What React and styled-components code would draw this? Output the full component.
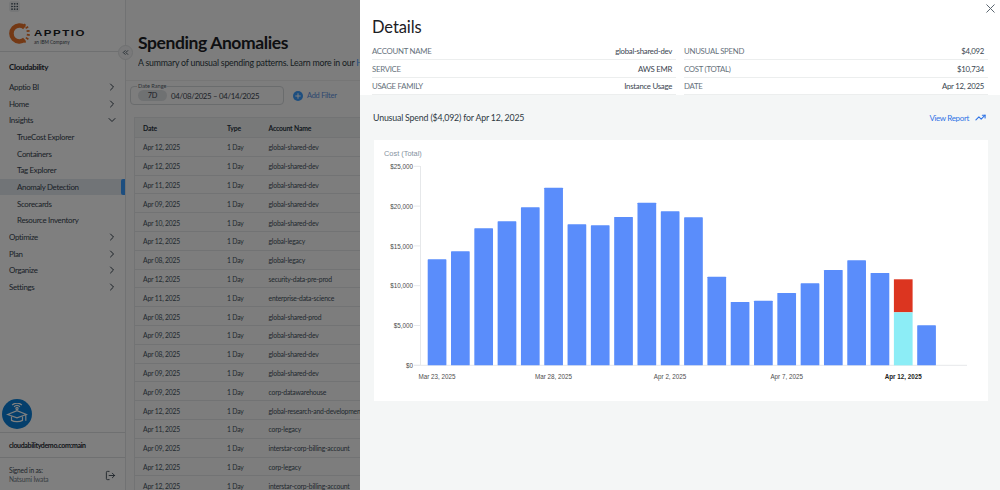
import React from 'react';
import styled, { createGlobalStyle } from 'styled-components';
import { ChevronRight, ChevronDown, ChevronsLeft, Plus, X, TrendingUp, LogOut, Grip } from 'lucide-react';

const Global = createGlobalStyle`
  html, body { margin: 0; height: 100%; overflow: hidden; background: #fff; }
  body { font-family: Lato, "Open Sans", sans-serif; color: #22272b; }
  * { box-sizing: border-box; }
`;

const Page = styled.div`
  position: relative;
  display: flex;
  width: 1000px;
  height: 490px;
  overflow: hidden;
`;

// left navigation
const Sidebar = styled.aside`
  position: relative;
  flex: 0 0 126px;
  display: flex;
  flex-direction: column;
  background: #ffffff;
  border-right: 1px solid #e2e4e6;
`;

const TopStrip = styled.div`
  height: 13px;
  padding-left: 9px;
  display: flex;
  align-items: center;
  color: #33414f;
`;

const GridBox = styled.div`
  width: 11px;
  height: 11px;
  display: flex;
  align-items: center;
  justify-content: center;
  border-radius: 3px;
  background: #eceef0;
`;

const LogoRow = styled.div`
  height: 39px;
  padding: 10px 0 0 9px;
  display: flex;
  align-items: flex-start;
  gap: 4px;
  border-bottom: 1px solid #dfe1e3;
`;

const LogoWords = styled.div`
  display: flex;
  flex-direction: column;
  padding-top: 6px;
`;

const LogoName = styled.div`
  font-family: "Liberation Sans", sans-serif;
  font-size: 9px;
  line-height: 9px;
  font-weight: 700;
  letter-spacing: 1.2px;
  transform: scaleX(1.28);
  transform-origin: left;
  color: #1c2024;
`;

const LogoSub = styled.div`
  font-size: 4.7px;
  line-height: 6px;
  margin-top: 1px;
  color: #444c54;
`;

const CollapseBtn = styled.div`
  position: absolute;
  top: 45px;
  left: 118px;
  width: 15px;
  height: 15px;
  border-radius: 50%;
  background: #f2f3f4;
  border: 1px solid #dfe1e3;
  display: flex;
  align-items: center;
  justify-content: center;
  color: #4b5a68;
`;

const ProductName = styled.div`
  height: 26.7px;
  padding: 8px 0 0 9px;
  font-size: 8px;
  line-height: 14px;
  letter-spacing: -0.3px;
  font-weight: 700;
  color: #1f2a33;
`;

const Nav = styled.nav`
  display: flex;
  flex-direction: column;
`;

const NavItem = styled.div`
  position: relative;
  height: 16.67px;
  padding-left: ${p => (p.$child ? '17px' : '9px')};
  padding-right: 7px;
  display: flex;
  align-items: center;
  justify-content: space-between;
  font-size: 7.9px;
  letter-spacing: -0.3px;
  color: #35424e;
  background: ${p => (p.$active ? '#e3e8ee' : 'transparent')};

  ${p => p.$active && `
    &::after {
      content: '';
      position: absolute;
      right: 0;
      top: 0;
      bottom: 0;
      width: 4px;
      border-radius: 2px 0 0 2px;
      background: #3a9cff;
    }
  `}
`;

const Spacer = styled.div`
  flex: 1;
`;

const HelpBtn = styled.div`
  width: 30px;
  height: 30px;
  margin: 0 0 3px 2px;
  border-radius: 50%;
  background: #0a7fd8;
  display: flex;
  align-items: center;
  justify-content: center;
`;

const TenantRow = styled.div`
  height: 26px;
  display: flex;
  align-items: center;
  padding-left: 9px;
  font-size: 7px;
  letter-spacing: -0.35px;
  font-weight: 700;
  color: #1f2a33;
  border-top: 1px solid #dfe1e3;
  border-bottom: 1px solid #dfe1e3;
`;

const UserRow = styled.div`
  height: 32px;
  padding: 9px 5px 0 9px;
  display: flex;
  justify-content: space-between;
  align-items: center;
`;

const UserText = styled.div`
  font-size: 6.6px;
  line-height: 8.6px;
  letter-spacing: -0.16px;
  color: #3e4a55;
  padding-bottom: 7px;

  & span {
    display: block;
    color: #727c86;
  }
`;

const LogoutSlot = styled.div`
  display: flex;
  padding: 0 4px 6px 0;
  color: #3e4a55;
`;

// main table page, clipped where the drawer starts
const Main = styled.main`
  flex: 0 0 234px;
  overflow: hidden;
  background: #fafbfb;
`;

const Header = styled.header`
  height: 81px;
  padding: 32px 0 0 12px;
  border-bottom: 1px solid #ececec;
`;

const Title = styled.h1`
  margin: 0;
  font-size: 17.5px;
  line-height: 22px;
  letter-spacing: -0.4px;
  font-weight: 700;
  color: #1c2024;
  white-space: nowrap;
`;

const Sub = styled.p`
  margin: 2px 0 0;
  font-size: 8.8px;
  line-height: 14px;
  letter-spacing: -0.22px;
  color: #2f3a44;
  white-space: nowrap;
  overflow: hidden;

  & a {
    color: #3a9cff;
  }
`;

const FilterBar = styled.div`
  height: 36px;
  padding: 5px 0 0 4px;
  display: flex;
  align-items: flex-start;
  gap: 9px;
`;

const DateBox = styled.div`
  position: relative;
  width: 154px;
  height: 19px;
  padding: 0 7px;
  display: flex;
  align-items: center;
  gap: 4px;
  border: 1px solid #d5d8da;
  border-radius: 4px;
  font-size: 7.8px;
  letter-spacing: -0.29px;
  color: #3a4550;
  white-space: nowrap;
`;

const DateLegend = styled.span`
  position: absolute;
  top: -5px;
  left: 6px;
  padding: 0 1px;
  font-size: 5.6px;
  line-height: 8px;
  letter-spacing: 0;
  color: #59646e;
  background: #fafbfb;
`;

const Pill = styled.span`
  width: 29px;
  height: 11px;
  border-radius: 6px;
  background: #dfe2e5;
  font-size: 7.4px;
  line-height: 11px;
  text-align: center;
`;

const AddFilter = styled.div`
  height: 19px;
  display: flex;
  align-items: center;
  gap: 4px;
  font-size: 7.4px;
  letter-spacing: -0.24px;
  color: #5a8fe0;
`;

const PlusDot = styled.span`
  width: 10px;
  height: 10px;
  border-radius: 50%;
  background: #3a9cff;
  display: flex;
  align-items: center;
  justify-content: center;
  color: #fff;
`;

const Table = styled.div`
  margin-left: 8px;
  border-left: 1px solid #e4e6e8;
`;

const Row = styled.div`
  display: grid;
  grid-template-columns: 84px 41.5px 1fr;
  align-items: center;
  height: ${p => (p.$head ? '21px' : '18.8px')};
  padding: ${p => (p.$head ? '0 0 0 8px' : '1px 0 0 8px')};
  font-size: 6.8px;
  letter-spacing: ${p => (p.$head ? '-0.17px' : '-0.2px')};
  font-weight: ${p => (p.$head ? 700 : 400)};
  color: ${p => (p.$head ? '#27323c' : '#46525d')};
  background: ${p => (p.$head ? '#f1f2f3' : 'transparent')};
  border-top: ${p => (p.$head ? '1px solid #e4e6e8' : 'none')};
  border-bottom: 1px solid #e4e6e8;
  white-space: nowrap;
  overflow: hidden;
`;

const Scrim = styled.div`
  position: absolute;
  inset: 0;
  background: rgba(0, 0, 0, 0.5);
`;

// details drawer
const Drawer = styled.section`
  position: absolute;
  top: 0;
  bottom: 0;
  left: 360px;
  right: 0;
  background: #f4f6f6;
`;

const DrawerTop = styled.div`
  position: relative;
  height: 95px;
  padding: 16px 11px 0 12px;
  background: #fff;
`;

const CloseBtn = styled.div`
  position: absolute;
  top: 1px;
  right: 2px;
  color: #5b6670;
  display: flex;
`;

const DrawerTitle = styled.h2`
  margin: 0 0 5px;
  height: 22px;
  font-size: 16.5px;
  line-height: 22px;
  letter-spacing: -0.1px;
  font-weight: 400;
  color: #1c2024;
`;

const Facts = styled.div`
  display: grid;
  grid-template-columns: 304px 304px;
  column-gap: 8px;
`;

const Fact = styled.div`
  height: 17.4px;
  padding-right: 4px;
  display: flex;
  justify-content: space-between;
  align-items: center;
  border-bottom: 1px solid #eceeee;
  font-size: 7.8px;
  letter-spacing: -0.27px;
  color: #3a4550;
`;

const FactLabel = styled.span`
  color: #66717b;
`;

const SpendBar = styled.div`
  height: 45px;
  padding: 0 14px 0 13px;
  display: flex;
  align-items: center;
  justify-content: space-between;
  font-size: 8.8px;
  letter-spacing: -0.18px;
  color: #2f3a44;
`;

const ReportLink = styled.a`
  display: flex;
  align-items: center;
  gap: 6px;
  font-size: 8px;
  letter-spacing: -0.35px;
  color: #2f74e6;
`;

const ChartCard = styled.div`
  width: 614px;
  height: 261px;
  margin-left: 14px;
  background: #fff;
`;

const ChartSvg = styled.svg`
  display: block;
  font-family: "Liberation Sans", Arial, sans-serif;
`;

const navTop = ['Apptio BI', 'Home'];
const navInsights = ['TrueCost Explorer', 'Containers', 'Tag Explorer', 'Anomaly Detection', 'Scorecards', 'Resource Inventory'];
const navBottom = ['Optimize', 'Plan', 'Organize', 'Settings'];

const rows = [
  ['Apr 12, 2025', 'global-shared-dev'],
  ['Apr 12, 2025', 'global-shared-dev'],
  ['Apr 11, 2025', 'global-shared-dev'],
  ['Apr 09, 2025', 'global-shared-dev'],
  ['Apr 10, 2025', 'global-shared-dev'],
  ['Apr 12, 2025', 'global-legacy'],
  ['Apr 08, 2025', 'global-legacy'],
  ['Apr 12, 2025', 'security-data-pre-prod'],
  ['Apr 11, 2025', 'enterprise-data-science'],
  ['Apr 08, 2025', 'global-shared-prod'],
  ['Apr 09, 2025', 'global-shared-dev'],
  ['Apr 08, 2025', 'global-shared-dev'],
  ['Apr 09, 2025', 'global-shared-dev'],
  ['Apr 09, 2025', 'corp-datawarehouse'],
  ['Apr 12, 2025', 'global-research-and-development'],
  ['Apr 11, 2025', 'corp-legacy'],
  ['Apr 09, 2025', 'interstar-corp-billing-account'],
  ['Apr 12, 2025', 'corp-legacy'],
  ['Apr 12, 2025', 'interstar-corp-billing-account'],
];

const facts = [
  ['ACCOUNT NAME', 'global-shared-dev'],
  ['UNUSUAL SPEND', '$4,092'],
  ['SERVICE', 'AWS EMR'],
  ['COST (TOTAL)', '$10,734'],
  ['USAGE FAMILY', 'Instance Usage'],
  ['DATE', 'Apr 12, 2025'],
];

// bar tops in page pixels, read from the chart
const barTops = [259.3, 251.3, 228.3, 221.3, 207.3, 187.7, 224.3, 225.3, 217, 202.7, 211.3, 217.3, 276.7, 302, 300.7, 293, 283.3, 270, 260.3, 273, 279.3, 325.3];
const yTicks = ['$25,000', '$20,000', '$15,000', '$10,000', '$5,000', '$0'];
const xLabels = [[0, 'Mar 23, 2025'], [5, 'Mar 28, 2025'], [10, 'Apr 2, 2025'], [15, 'Apr 7, 2025'], [20, 'Apr 12, 2025']];

const baseY = 225.3;
const barX = i => 53.7 + i * 23.31;

const Logo = () => (
  <svg width="21" height="21" viewBox="0 0 21 21">
    <path d="M15.6 4.4A8 8 0 1 0 15.6 16.6" fill="none" stroke="#e8732a" strokeWidth="4.6" />
    <path d="M14.6 3l1.6-2M16.6 5.2l2.6-1.4M17.6 8.2l3-.4M17.8 11.6l3 .6M16.8 14.6l2.6 1.6M14.8 17l1.6 2.6" stroke="#e8732a" strokeWidth="1.7" fill="none" />
  </svg>
);

const Cap = () => (
  <svg width="22" height="22" viewBox="0 0 20 20" fill="none" stroke="#fff" strokeWidth="1.1">
    <path d="M1.5 10.5L10 7l8.5 3.5L10 13.5z" />
    <path d="M5 12.2v3.6c2.5 1.6 7.5 1.6 10 0v-3.6" />
    <path d="M18 10.8v5.4" />
    <circle cx="10" cy="5" r="1" />
    <path d="M7.3 3.4a4 4 0 0 1 5.4 0M5.6 1.8a6.4 6.4 0 0 1 8.8 0" />
  </svg>
);

// labels in the reference are a little narrower than Arial at the same height
const AxisText = ({ x, y, anchor, bold, children }) => (
  <text
    transform={`translate(${x} ${y}) scale(0.9 1)`}
    fontSize="7"
    textAnchor={anchor}
    fontWeight={bold ? 700 : 400}
    fill={bold ? '#222' : '#4d4d4d'}
  >
    {children}
  </text>
);

const Chart = () => (
  <ChartSvg width="614" height="261" viewBox="0 0 614 261">
    <text x="10" y="16" fontSize="7.4" fill="#8592a0">Cost (Total)</text>
    {yTicks.map((t, i) => {
      const y = 26.3 + i * 39.8;
      return (
        <g key={t}>
          <line x1="40" x2="46" y1={y} y2={y} stroke="#e6e8ea" />
          <AxisText x={39} y={y + 2.6} anchor="end">{t}</AxisText>
        </g>
      );
    })}
    <line x1="46.5" x2="46.5" y1="26" y2={baseY} stroke="#e6e8ea" />
    <line x1="40" x2="593" y1={baseY} y2={baseY} stroke="#e6e8ea" />
    {barTops.map((top, i) => {
      const y = top - 140;
      if (i === 20) {
        return (
          <g key={i}>
            <rect x={barX(i)} y={y} width="18.7" height={172.3 - y} fill="#dc3520" />
            <rect x={barX(i)} y="172.3" width="18.7" height={baseY - 172.3} fill="#8cedf6" />
          </g>
        );
      }
      return <rect key={i} x={barX(i)} y={y} width="18.7" height={baseY - y} rx="0.6" fill="#5a8dfb" />;
    })}
    {xLabels.map(([i, label]) => (
      <AxisText key={label} x={barX(i) + 9.3} y={239.3} anchor="middle" bold={i === 20}>{label}</AxisText>
    ))}
  </ChartSvg>
);

const App = () => {
  return (
    <Page>
      <Global />
      <Sidebar>
        <TopStrip>
          <GridBox><Grip size={9} strokeWidth={2} /></GridBox>
        </TopStrip>
        <LogoRow>
          <Logo />
          <LogoWords>
            <LogoName>APPTIO</LogoName>
            <LogoSub>an IBM Company</LogoSub>
          </LogoWords>
        </LogoRow>
        <CollapseBtn><ChevronsLeft size={9} strokeWidth={2.6} /></CollapseBtn>
        <ProductName>Cloudability</ProductName>
        <Nav>
          {navTop.map(n => (
            <NavItem key={n}>{n}<ChevronRight size={12} /></NavItem>
          ))}
          <NavItem>Insights<ChevronDown size={12} /></NavItem>
          {navInsights.map(n => (
            <NavItem key={n} $child $active={n === 'Anomaly Detection'}>{n}</NavItem>
          ))}
          {navBottom.map(n => (
            <NavItem key={n}>{n}<ChevronRight size={12} /></NavItem>
          ))}
        </Nav>
        <Spacer />
        <HelpBtn><Cap /></HelpBtn>
        <TenantRow>cloudabilitydemo.com:main</TenantRow>
        <UserRow>
          <UserText>
            Signed in as:
            <span>Natsumi Iwata</span>
          </UserText>
          <LogoutSlot><LogOut size={11} /></LogoutSlot>
        </UserRow>
      </Sidebar>

      <Main>
        <Header>
          <Title>Spending Anomalies</Title>
          <Sub>A summary of unusual spending patterns. Learn more in our <a>Help</a></Sub>
        </Header>
        <FilterBar>
          <DateBox>
            <DateLegend>Date Range</DateLegend>
            <Pill>7D</Pill>
            04/08/2025 – 04/14/2025
          </DateBox>
          <AddFilter>
            <PlusDot><Plus size={8} strokeWidth={3} /></PlusDot>
            Add Filter
          </AddFilter>
        </FilterBar>
        <Table>
          <Row $head>
            <span>Date</span>
            <span>Type</span>
            <span>Account Name</span>
          </Row>
          {rows.map(([date, account], i) => (
            <Row key={i}>
              <span>{date}</span>
              <span>1 Day</span>
              <span>{account}</span>
            </Row>
          ))}
        </Table>
      </Main>

      <Scrim />

      <Drawer>
        <DrawerTop>
          <CloseBtn><X size={15} strokeWidth={1.6} /></CloseBtn>
          <DrawerTitle>Details</DrawerTitle>
          <Facts>
            {facts.map(([label, value]) => (
              <Fact key={label}>
                <FactLabel>{label}</FactLabel>
                <span>{value}</span>
              </Fact>
            ))}
          </Facts>
        </DrawerTop>
        <SpendBar>
          <span>Unusual Spend ($4,092) for Apr 12, 2025</span>
          <ReportLink>View Report <TrendingUp size={11} strokeWidth={2.4} /></ReportLink>
        </SpendBar>
        <ChartCard><Chart /></ChartCard>
      </Drawer>
    </Page>
  );
};

export default App;
